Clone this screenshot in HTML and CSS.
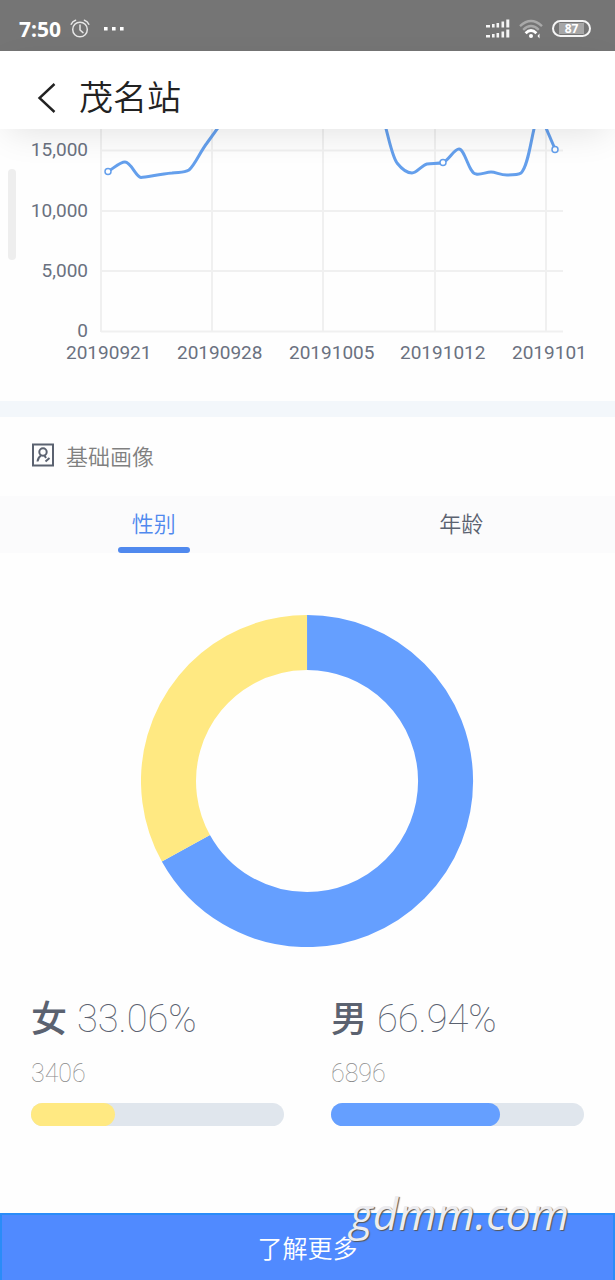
FILE: index.html
```html
<!DOCTYPE html>
<html lang="zh-CN">
<head>
    <meta charset="UTF-8">
    <meta name="viewport" content="width=device-width, initial-scale=1.0">
    <title>茂名站</title>
    <link rel="stylesheet" href="styles.css">
</head>
<body>
    <div class="status-bar">
        <span class="time">7:50</span>
        <svg class="alarm" width="20" height="20" viewBox="0 0 20 20" fill="none" stroke="#e6e6e6" stroke-width="1.5" stroke-linecap="round">
            <circle cx="10" cy="10.5" r="7.3"/>
            <path d="M10 6v5l3 2.6M1.2 5.2Q2.5 2.2 5.6 1.2M18.8 5.2Q17.5 2.2 14.4 1.2"/>
        </svg>
        <svg class="more" width="22" height="4" viewBox="0 0 22 4" fill="#fff">
            <path d="M0 0h3.6v3.6H0zM8 0h3.6v3.6H8zM16 0h3.6v3.6H16z"/>
        </svg>
        <div class="status-right">
            <svg width="24" height="20" viewBox="0 0 24 20" fill="#f5f5f5">
                <path d="M0 6h4v2.4H0zM6 5h2.6v3.4H6zM10.5 4h2.6v4.4h-2.6zM15.5 2.5h2.6v5.9h-2.6zM20.3 0.5h3v7.9h-3z"/>
                <path d="M0 16h4v2.4H0zM6 15h2.6v3.4H6zM10.5 14h2.6v4.4h-2.6zM15.5 12.5h2.6v5.9h-2.6zM20.3 10.5h3v7.9h-3z"/>
            </svg>
            <svg width="24" height="20" viewBox="0 0 24 20" fill="none" stroke-width="2.4">
                <path d="M1 7.2Q12 -3 23 7.2" stroke="#a9a9a9"/>
                <path d="M4.2 10.8Q12 3.4 19.8 10.8" stroke="#a9a9a9"/>
                <path d="M6.6 14.2Q12 8.8 17.4 14.2" stroke="#fff" stroke-width="2.8"/>
                <circle cx="12" cy="17" r="2" fill="#fff"/>
                <path d="M18.5 17l2-2.5v5z" fill="#fff"/>
            </svg>
            <span class="battery"><span class="battery-level">87</span></span>
        </div>
    </div>

    <header class="header">
        <a href="#" class="back" aria-label="返回">
            <svg width="20" height="32" viewBox="0 0 20 32" fill="none" stroke="#222" stroke-width="2.4">
                <path d="M17.5 2L2.5 16l15 14"/>
            </svg>
        </a>
        <h1>茂名站</h1>
    </header>

    <main>
        <section class="trend">
            <span class="scroll-thumb"></span>
            <svg class="trend-chart" viewBox="0 0 615 272">
                <g class="grid">
                    <path d="M101 21.5H563M101 82H563M101 142H563M101 202.5H563"/>
                    <path d="M101 0V203M212 0V203M323 0V203M435 0V203M546 0V203"/>
                </g>
                <g class="line">
                    <path d="M108 42.5C114 39 120 33 125 33C131 33 136 48 141 48.5C146 48.5 160 45 172 44C180 43 184 44 189 41C195 36 200 23 207 14L220 -4"/>
                    <path d="M385 -4C389 10 392 27 397 34C401 39 407 44 412 44C417 44 422 36 427 35C432 34 438 35 443 33.5C449 31 454 20 459 20C465 20 469 45 476 45C481 46 486 43 491 43C496 43 500 46 507 46C513 46 518 46 521 44C528 38 531 10 535 -4"/>
                    <path d="M546 -1L555 20"/>
                    <circle cx="108" cy="42.5" r="3"/>
                    <circle cx="443" cy="33.5" r="3"/>
                    <circle cx="555" cy="20.5" r="3"/>
                </g>
                <g class="axis-y">
                    <text x="88" y="27">15,000</text>
                    <text x="88" y="88">10,000</text>
                    <text x="88" y="148">5,000</text>
                    <text x="88" y="208">0</text>
                </g>
                <g class="axis-x">
                    <text x="66" y="230">20190921</text>
                    <text x="177" y="230">20190928</text>
                    <text x="289" y="230">20191005</text>
                    <text x="400" y="230">20191012</text>
                    <text x="512" y="230">2019101</text>
                </g>
            </svg>
        </section>

        <section class="portrait">
            <h2 class="portrait-title">
                <svg width="22" height="24" viewBox="0 0 22 24" fill="none" stroke="#5b6270" stroke-width="2">
                    <path d="M1 1.5h20v21H1z"/>
                    <circle cx="11" cy="9" r="3.7"/>
                    <path d="M9 12.5Q6 14.5 5.5 18.5M12.5 12.5L14 15M13.5 18.5l4-3.5"/>
                </svg>
                基础画像
            </h2>

            <div class="tabs">
                <button type="button" class="tab active">性别</button>
                <button type="button" class="tab">年龄</button>
            </div>

            <svg class="donut" viewBox="0 0 332 332">
                <circle class="donut-male" cx="166" cy="166" r="138.5" pathLength="100" stroke-dasharray="66.94 33.06" transform="rotate(-90 166 166)"/>
                <circle class="donut-female" cx="166" cy="166" r="138.5" pathLength="100" stroke-dasharray="33.06 66.94" transform="rotate(150.98 166 166)"/>
            </svg>

            <div class="stats">
                <div class="stat">
                    <div class="stat-rate"><span class="stat-name">女</span>33.06%</div>
                    <div class="stat-count">3406</div>
                    <div class="bar"><div class="bar-fill female" style="width: 33.06%"></div></div>
                </div>
                <div class="stat">
                    <div class="stat-rate"><span class="stat-name">男</span>66.94%</div>
                    <div class="stat-count">6896</div>
                    <div class="bar"><div class="bar-fill male" style="width: 66.94%"></div></div>
                </div>
            </div>
        </section>
    </main>

    <footer class="footer">
        <button type="button" class="more-btn">了解更多</button>
        <span class="watermark">gdmm.com</span>
    </footer>
</body>
</html>
```

FILE: styles.css
```css
* {
    margin: 0;
    padding: 0;
    box-sizing: border-box;
}

body {
    min-height: 100vh;
    display: flex;
    flex-direction: column;
    background: #fefefe;
    color: #5b6270;
    font-family: Roboto, "Noto Sans CJK SC", sans-serif;
}

.status-bar {
    display: flex;
    align-items: center;
    height: 51px;
    padding: 6px 24px 0 19px;
    background: #757575;
    color: #fff;
}

.time {
    font: bold 21px/28px "Noto Sans", sans-serif;
}

.alarm {
    margin-left: 9px;
}

.more {
    margin-left: 14px;
}

.status-right {
    display: flex;
    align-items: center;
    gap: 9px;
    margin-left: auto;
}

.battery {
    display: flex;
    width: 39px;
    height: 17px;
    padding: 1px 5px;
    border: 2px solid #f5f5f5;
    border-radius: 9px;
}

.battery-level {
    flex: 1;
    background: #a6a6a6;
    font: bold 12px/11px "Noto Sans", sans-serif;
    text-align: center;
}

.header {
    position: relative;
    z-index: 1;
    display: flex;
    align-items: center;
    gap: 22px;
    height: 78px;
    padding: 16px 37px 0;
    background: #fff;
    box-shadow: 0 10px 36px -8px rgba(0, 0, 0, 0.12);
}

.back {
    display: flex;
}

h1 {
    color: #222;
    font-size: 34px;
    font-weight: 350;
    line-height: 48px;
}

main {
    flex: 1;
}

.trend {
    position: relative;
    border-bottom: 16px solid #f3f7fb;
}

.trend-chart {
    display: block;
    width: 100%;
}

.scroll-thumb {
    position: absolute;
    top: 40px;
    left: 8px;
    width: 8px;
    height: 91px;
    border-radius: 4px;
    background: #eee;
}

.grid {
    fill: none;
    stroke: #f0f0f0;
    stroke-width: 2;
}

.line {
    fill: none;
    stroke: #649fec;
    stroke-width: 3;
    stroke-linejoin: round;
}

.line circle {
    fill: #fff;
    stroke-width: 1.5;
}

.axis-y,
.axis-x {
    fill: #6a7180;
    font-size: 19px;
}

.axis-y {
    text-anchor: end;
}

.portrait-title {
    display: flex;
    align-items: center;
    gap: 12px;
    height: 79px;
    padding: 0 32px 3px;
    color: #808080;
    font-size: 22px;
    font-weight: 350;
}

.tabs {
    display: flex;
    height: 57px;
    background: #fbfbfc;
}

.tab {
    flex: 1;
    position: relative;
    padding-bottom: 6px;
    border: none;
    background: none;
    color: #5b6270;
    font-family: inherit;
    font-size: 22px;
    font-weight: 350;
}

.tab.active {
    color: #5089ee;
}

.tab.active::after {
    content: "";
    position: absolute;
    bottom: 0;
    left: 50%;
    width: 72px;
    height: 6px;
    margin-left: -36px;
    border-radius: 3px;
    background: #5089ee;
}

.donut {
    display: block;
    width: 54%;
    margin: 62px auto 48px;
    fill: none;
    stroke-width: 55;
}

.donut-male {
    stroke: #659fff;
}

.donut-female {
    stroke: #ffe982;
}

.stats {
    display: grid;
    grid-template-columns: 1fr 1fr;
    gap: 47px;
    padding: 0 31px;
}

.stat-rate {
    display: flex;
    align-items: baseline;
    gap: 10px;
    font-size: 38px;
    font-weight: 100;
    line-height: 48px;
}

.stat-name {
    font-size: 36px;
    font-weight: 500;
}

.stat-count {
    margin: 15px 0 14px;
    color: #8a8a8a;
    font-size: 25px;
    font-weight: 100;
    line-height: 30px;
}

.bar {
    height: 23px;
    border-radius: 12px;
    background: #e0e6ed;
}

.bar-fill {
    height: 100%;
    border-radius: 12px;
}

.female {
    background: #ffe982;
}

.male {
    background: #659fff;
}

.footer {
    position: relative;
}

.more-btn {
    display: block;
    width: 100%;
    height: 67px;
    padding-bottom: 2px;
    border: 2px solid #2a8cf8;
    border-bottom: none;
    background: #508aff;
    color: #fff;
    font-family: inherit;
    font-size: 25px;
    font-weight: 350;
}

.watermark {
    position: absolute;
    top: -28px;
    right: 46px;
    color: #ececf0;
    font: italic 500 44px/56px "Open Sans", sans-serif;
    text-shadow: 1px 1px 1px #555;
}
```
